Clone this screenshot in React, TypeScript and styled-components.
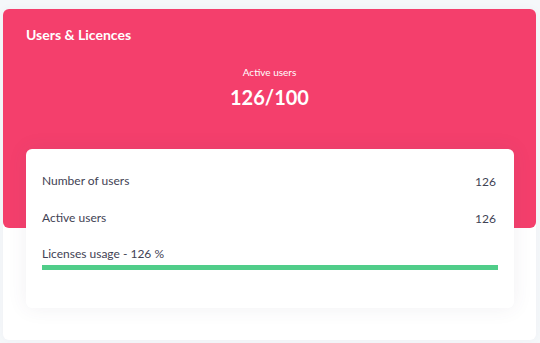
import { styled, createGlobalStyle } from "styled-components";

const GlobalStyle = createGlobalStyle`
  html, body {
    margin: 0;
    padding: 0;
    background: #f5f8fa;
    font-family: Lato, "Open Sans", sans-serif;
  }
`;

type Stat = { label: string; value: string };

const stats: Stat[] = [
  { label: "Number of users", value: "126" },
  { label: "Active users", value: "126" },
];

const App = () => {
  const active = 126;
  const licences = 100;
  const usage = Math.round((active / licences) * 100);
  return (
    <>
      <GlobalStyle />
      <Page>
        <Card>
          <Header>
            <Title>Users &amp; Licences</Title>
            <Summary>
              <SummaryLabel>Active users</SummaryLabel>
              <SummaryValue>
                {active}/{licences}
              </SummaryValue>
            </Summary>
          </Header>
          <StatsCard>
            {stats.map((s) => (
              <StatRow key={s.label}>
                <StatLabel>{s.label}</StatLabel>
                <StatValue>{s.value}</StatValue>
              </StatRow>
            ))}
            <UsageBlock>
              <StatLabel>Licenses usage - {usage} %</StatLabel>
              <Progress>
                <ProgressFill style={{ width: `${Math.min(usage, 100)}%` }} />
              </Progress>
            </UsageBlock>
          </StatsCard>
        </Card>
      </Page>
    </>
  );
};

export default App;

const Page = styled.div`
  padding: 9px 4px 3px 3px;
`;
const Card = styled.div`
  background: #fff;
  border-radius: 6px;
  height: 331px;
  box-shadow: 0 0 10px rgba(82, 63, 105, 0.04);
`;
const Header = styled.div`
  background: #f43f6c;
  border-radius: 6px;
  height: 219px;
  padding: 17px 23px 0;
  box-sizing: border-box;
`;
const Title = styled.h3`
  margin: 0;
  color: #fff;
  font-size: 14px;
  font-weight: 700;
`;
const Summary = styled.div`
  display: flex;
  flex-direction: column;
  align-items: center;
  margin-top: 23px;
`;
const SummaryLabel = styled.span`
  color: #fff;
  font-size: 10px;
`;
const SummaryValue = styled.span`
  color: #fff;
  font-size: 20px;
  font-weight: 700;
  margin-top: 7px;
`;
const StatsCard = styled.div`
  background: #fff;
  border-radius: 6px;
  margin: -79px 22px 0 23px;
  height: 159px;
  box-sizing: border-box;
  padding: 24px 16px 0;
  display: flex;
  flex-direction: column;
  gap: 21.6px;
  box-shadow: 0 0 20px rgba(82, 63, 105, 0.08);
`;
const StatRow = styled.div`
  display: flex;
  justify-content: space-between;
  align-items: center;
  padding-right: 2px;
`;
const StatLabel = styled.span`
  color: #3f4254;
  font-size: 12px;
`;
const StatValue = styled.span`
  color: #3f4254;
  font-size: 12px;
  position: relative;
  top: 1px;
`;
const UsageBlock = styled.div`
  display: flex;
  flex-direction: column;
  gap: 4px;
`;
const Progress = styled.div`
  height: 5px;
  background: #e8fff3;
`;
const ProgressFill = styled.div`
  height: 100%;
  background: #50cd89;
`;
